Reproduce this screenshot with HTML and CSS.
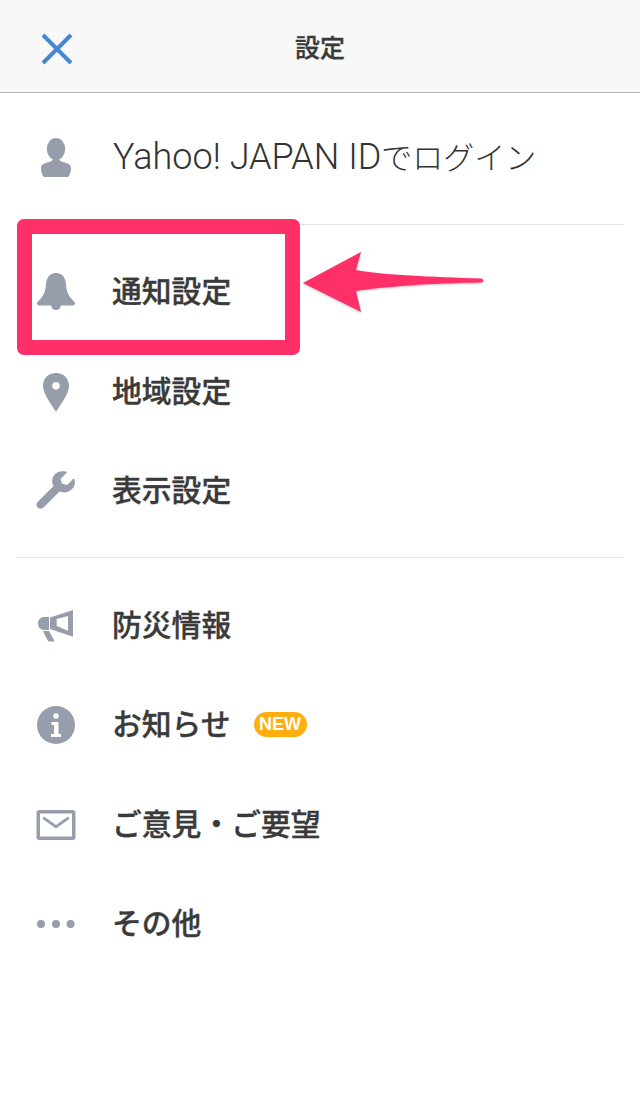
FILE: index.html
```html
<!DOCTYPE html>
<html lang="ja">
<head>
<meta charset="utf-8">
<title>設定</title>
<link rel="stylesheet" href="styles.css">
</head>
<body>
<div class="screen">
  <header class="header">
    <svg class="close" viewBox="0 0 32 32"><path d="M2 2 30 30M30 2 2 30"/></svg>
    <h1 class="title">設定</h1>
  </header>
  <section class="group group-login">
    <div class="row row-login">
      <svg class="icon" viewBox="0 0 40 40"><ellipse cx="20" cy="11" rx="9.200" ry="11"/><path d="M5 30c0-3 3-5 8-6 2-.5 3-1 4-3h6c1 2 2 2.500 4 3 5 1 8 3 8 6 0 3-.8 6-2 8-.5.7-1 1-2 1H9c-1 0-1.500-.3-2-1-1.200-2-2-5-2-8z"/></svg>
      <span class="label-light"><span class="latin">Yahoo! JAPAN ID</span>でログイン</span>
    </div>
  </section>
  <section class="group group-main">
    <div class="row h98"><svg class="icon" viewBox="0 0 40 40"><path d="M20 1c-6 0-9.500 4.500-10 11-.5 7-2 11-6 15.500C2 29.500.5 30.500 1 32c.3.8 1.500 1.500 3 1.500h11C15.500 36.500 17.500 38 20 38s4.500-1.500 5-4.500h11c1.500 0 2.700-.7 3-1.500.5-1.500-1-2.500-3-4.500C32 23 30.500 19 30 12 29.500 5.500 26 1 20 1z"/></svg><span class="label">通知設定</span></div>
    <div class="row h101"><svg class="icon" viewBox="0 0 40 40"><path fill-rule="evenodd" d="M20 1C11.500 1 7 7 7 14c0 8 9 19 12 24.500.5 1 1.500 1 2 0 3-5.500 12-16.500 12-24.500C33 7 28.500 1 20 1zm0 9a3.800 3.800 0 1 1 0 7.600 3.800 3.800 0 0 1 0-7.600z"/></svg><span class="label">地域設定</span></div>
    <div class="row h98"><svg class="icon" viewBox="0 0 40 40"><path d="M38.500 8.500c-.3-.8-1.100-.9-1.700-.3L31 14l-5-1.500L24.500 8l5.800-5.800c.6-.6.4-1.300-.4-1.600C24.500-.7 19 1.500 17 6c-1.500 3.300-1 6.500.5 9L2.500 30c-2.500 2.500-2.500 4.500-1 6.300C3.200 38 5.500 38.500 8 36l15.500-15.500c3 1.300 6.500 1.500 9.500-.2 5-2.800 7-7.300 5.500-11.800z"/></svg><span class="label">表示設定</span></div>
  </section>
  <section class="group group-last">
    <div class="row h99"><svg class="icon" viewBox="0 0 40 40"><path fill-rule="evenodd" d="M37 4v26.700L14 23V11.500zM20.700 13v7l11.300 4.700V10z"/><path d="M13 11H8C4 11 2 14 2 17.500S4 24 8 24h5z"/><path d="M7 25h6l5 9c.5 1-.2 1.500-1 1.500h-3.500c-1 0-1.500-.5-2-1.500z"/></svg><span class="label">防災情報</span></div>
    <div class="row h99"><svg class="icon" viewBox="0 0 40 40"><circle cx="20" cy="20" r="19"/><circle class="cut" cx="20" cy="11" r="2.800"/><path class="cut" d="M15.500 17h7v12h2.500v3H15v-3h3V20h-2.500z"/></svg><span class="label">お知らせ</span><span class="badge">NEW</span></div>
    <div class="row h101"><svg class="icon" viewBox="0 0 40 40"><path fill-rule="evenodd" d="M3 5h34c1.300 0 2.500 1.200 2.500 2.500v25c0 1.300-1.200 2.500-2.500 2.500H3C1.700 35 .5 33.800.5 32.500v-25C.5 6.200 1.700 5 3 5zm1 3.500v23h32v-23z"/><path d="M8 11.500 20 20l12-8.500 1.600 2.300L20 23.500 6.400 13.800z"/></svg><span class="label">ご意見・ご要望</span></div>
    <div class="row h98"><svg class="icon" viewBox="0 0 40 40"><circle cx="5" cy="20" r="4"/><circle cx="20" cy="20" r="4"/><circle cx="34.500" cy="20" r="4"/></svg><span class="label">その他</span></div>
  </section>
  <div class="callout-box"></div>
  <svg class="callout-arrow" viewBox="0 0 190 64"><path d="M1 33 59 2 54 20C80 25 130 27 179 28.500 182 29 182 32 179 32.500 130 33 80 37 54 41L59 62z"/></svg>
</div>
</body>
</html>
```
FILE: styles.css
```css
* { box-sizing: border-box; }
html, body { margin: 0; padding: 0; background: #fff; }
.screen {
  position: relative;
  width: 640px;
  height: 1100px;
  overflow: hidden;
  font-family: "Noto Sans CJK JP", sans-serif;
  color: #333;
}
.header {
  position: relative;
  display: flex;
  align-items: center;
  justify-content: center;
  height: 93px;
  background: #f8f8f9;
  border-bottom: 1px solid #b4b4b4;
}
.close {
  position: absolute;
  left: 41px;
  top: 33px;
  width: 32px;
  height: 32px;
  fill: none;
  stroke: #4687d2;
  stroke-width: 4;
}
.title { margin: 0; font-size: 25px; font-weight: 500; line-height: 1; color: #3a3a3a; -webkit-text-stroke: .3px #3a3a3a; }
.group {
  margin: 0 16px;
  border-bottom: 1px solid #e2e2e2;
}
.group-login { height: 132px; }
.group-main { padding: 18px 0 17px; }
.group-last { padding: 18px 0 0; border-bottom: 0; }
.row { display: flex; align-items: center; padding-left: 20px; }
.row-login { height: 130px; }
.h98 { height: 98px; }
.h99 { height: 99px; }
.h101 { height: 101px; }
.icon { width: 40px; height: 40px; flex: none; fill: #979eab; margin-right: 37px; }
.icon .cut { fill: #fff; }
.label { margin-bottom: 4px; margin-left: -1px; font-size: 29.8px; font-weight: 500; line-height: 1; color: #3a3a3a; white-space: nowrap; -webkit-text-stroke: .35px #3a3a3a; }
.label-light { margin-bottom: 2px; font-size: 31px; font-weight: 300; line-height: 1; white-space: nowrap; }
.latin { font-family: "Roboto", sans-serif; font-size: 36px; font-weight: 300; }
.badge {
  margin-left: 23px;
  width: 53px;
  height: 25px;
  border-radius: 13px;
  background: #ffae0d;
  color: #fff;
  font-family: "Liberation Sans", sans-serif;
  font-size: 18px;
  font-weight: 700;
  line-height: 25px;
  text-align: center;
}
.callout-box {
  position: absolute;
  left: 17px;
  top: 219px;
  width: 283px;
  height: 136px;
  border: 15px solid #ff3068;
  border-radius: 7px;
}
.callout-arrow {
  position: absolute;
  left: 302px;
  top: 250px;
  width: 190px;
  height: 64px;
  fill: #ff3068;
  filter: drop-shadow(0 1px 1px rgba(0,0,0,.25));
}
```
